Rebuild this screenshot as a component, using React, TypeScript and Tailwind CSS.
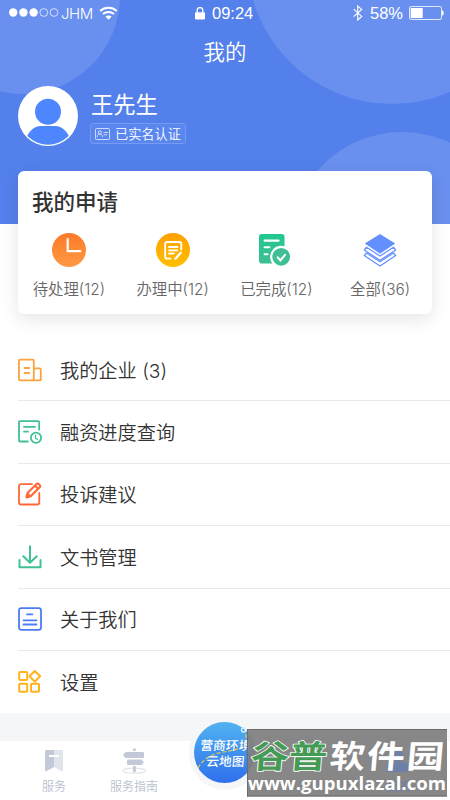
import React from "react";

const FONT = "font-['Liberation_Sans','Noto_Sans_CJK_SC',sans-serif]";
const CJK = "font-['Noto_Sans_CJK_SC',sans-serif]";
const MIXED = "font-['Inter','Noto_Sans_CJK_SC',sans-serif]";

function StatusBar() {
  return (
    <div className="relative flex h-[27px] items-center justify-between pl-[9px] pr-[6px] text-white">
      <div className="flex items-center">
        <svg className="-mt-[2px]" width="50" height="10" viewBox="0 0 50 10" fill="white">
          <circle cx="4.2" cy="4.5" r="4.2" />
          <circle cx="14.4" cy="4.5" r="4.2" />
          <circle cx="24.6" cy="4.5" r="4.2" />
          <circle cx="34.8" cy="4.5" r="3.9" fill="none" stroke="white" strokeWidth="0.7" />
          <circle cx="45" cy="4.5" r="3.9" fill="none" stroke="white" strokeWidth="0.7" />
        </svg>
        <span className="ml-[2px] w-[32px] text-[15px] leading-none tracking-[-0.4px] font-['Inter',sans-serif] font-light">JHM</span>
        <svg className="ml-[6px] -mt-[2px]" width="19" height="14" viewBox="0 0 19 14" fill="none" stroke="white" strokeWidth="2">
          <path d="M1.2 4.9c4.6-4.3 12-4.3 16.6 0M4 8c3.2-2.8 7.8-2.8 11 0" />
          <path d="M6.4 10.5c1.8-1.5 4.4-1.5 6.2 0L9.5 13.7z" fill="white" stroke="none" />
        </svg>
      </div>
      <div className="absolute left-[195px] top-[4px] flex h-[19px] items-center">
        <svg width="10" height="13" viewBox="0 0 10 13">
          <rect y="5.2" width="10" height="7.3" rx="1" fill="white" />
          <path d="M2.2 5.5V3.4a2.8 2.8 0 0 1 5.6 0v2.1" fill="none" stroke="white" strokeWidth="1.3" />
        </svg>
        <span className="ml-[7px] font-['Liberation_Sans',sans-serif] text-[16.5px] leading-[19px]">09:24</span>
      </div>
      <div className="flex items-center">
        <svg className="-mt-[1px]" width="10" height="16" viewBox="0 0 10 16" fill="none" stroke="white" strokeWidth="1.1">
          <path d="M.7 4.2l8 7.2-4 3.6V1l4 3.4-8 7.2" />
        </svg>
        <span className="ml-[7px] w-[34px] whitespace-nowrap font-['Liberation_Sans',sans-serif] text-[16.5px] leading-[19px]">58%</span>
        <svg className="ml-[5px] -mt-[1px]" width="35" height="14" viewBox="0 0 35 14">
          <rect x=".5" y=".5" width="32" height="13" rx="1.8" fill="none" stroke="white" strokeWidth=".8" />
          <rect x="1.7" y="2" width="12" height="10" fill="white" />
          <path d="M33 4.3c2.3.8 2.3 4.6 0 5.4z" fill="white" />
        </svg>
      </div>
    </div>
  );
}

function Header() {
  return (
    <header className="relative h-[224px] overflow-hidden bg-[#5380eb]">
      <svg className="absolute inset-0" width="450" height="224" fill="#6990ef">
        <circle cx="22" cy="-4" r="98" />
        <circle cx="392" cy="-41" r="145" />
        <circle cx="402" cy="244" r="112" />
      </svg>
      <StatusBar />
      <h1 className={`${CJK} relative flex h-[48px] items-center justify-center text-[21.5px] font-[350] text-white`}>我的</h1>
      <div className="relative mt-[11px] flex pl-[18px]">
        <svg width="60" height="60" viewBox="0 0 60 60">
          <defs>
            <clipPath id="face"><circle cx="30" cy="30" r="28.7" /></clipPath>
          </defs>
          <circle cx="30" cy="30" r="30" fill="white" />
          <g clipPath="url(#face)" fill="#4e86ff">
            <circle cx="30" cy="25.8" r="13" />
            <path d="M7 56c2-9 8-16 16-16h14c8 0 14 7 16 16v4H7z" />
          </g>
        </svg>
        <div className={`${CJK} ml-[12px] text-white`}>
          <div className="mt-[2px] h-[31px] pl-[1px] text-[22.3px] leading-[31px]">王先生</div>
          <div className="mt-[4px] flex h-[21px] w-[96px] items-center rounded-[3px] border border-[#779bf1] bg-[#5986ef] pl-[4px]">
            <svg width="15" height="12" viewBox="0 0 15 12" fill="none" stroke="white" strokeWidth=".7">
              <rect x=".5" y=".5" width="14" height="11" rx="1" />
              <circle cx="4.8" cy="4.3" r="1.6" />
              <path d="M2 9c.5-4 5-4 5.6 0M8.5 4.5H13M8.5 6.8H12" />
            </svg>
            <span className="ml-[5px] mt-[1px] whitespace-nowrap text-[13.2px] font-[350] leading-[18px]">已实名认证</span>
          </div>
        </div>
      </div>
    </header>
  );
}

const PendingIcon = () => (
  <svg width="34" height="34" viewBox="0 0 34 34">
    <defs><linearGradient id="po" x2="0" y2="1"><stop stopColor="#fd7a28" /><stop offset="1" stopColor="#ff9942" /></linearGradient></defs>
    <circle cx="17" cy="17" r="17" fill="url(#po)" />
    <path d="M15.7 6v12.2h12.6" fill="none" stroke="white" strokeWidth="2.2" strokeLinecap="round" />
  </svg>
);
const ProcessIcon = () => (
  <svg width="34" height="34" viewBox="0 0 34 34">
    <defs><linearGradient id="py" x2="0" y2="1"><stop stopColor="#ffa000" /><stop offset="1" stopColor="#ffc000" /></linearGradient></defs>
    <circle cx="17" cy="17" r="17" fill="url(#py)" />
    <g fill="none" stroke="white" strokeWidth="1.8" strokeLinecap="round" strokeLinejoin="round">
      <path d="M25.3 16.5V11a2 2 0 0 0-2-2H11.2a2 2 0 0 0-2 2v12.7a2 2 0 0 0 2 2h3.2M13 14h8.4M13 17.3h8.4M13 20.5h4.8" />
      <path d="M19.5 25.8l5.2-6.1" strokeWidth="2.3" />
    </g>
  </svg>
);
const DoneIcon = () => (
  <svg width="34" height="34" viewBox="0 0 34 34">
    <defs><linearGradient id="dg" x2="0" y2="1"><stop stopColor="#20c88e" /><stop offset="1" stopColor="#40be95" /></linearGradient></defs>
    <g transform="translate(-1 0)">
      <rect x="1" y="1" width="25.5" height="29.5" rx="2.8" fill="url(#dg)" />
      <path d="M6.6 7.6h14M6.6 14.2h4.8M6.6 21.3H9.5" stroke="white" strokeWidth="2.1" strokeLinecap="round" />
      <circle cx="23.2" cy="23.8" r="10" fill="#40be95" stroke="white" strokeWidth="2.2" />
      <path d="M19.7 24.4l2.7 3 4.6-5.6" fill="none" stroke="white" strokeWidth="2.1" strokeLinecap="round" />
    </g>
  </svg>
);
const LayersIcon = () => (
  <svg width="34" height="34" viewBox="0 0 34 34" fill="none" stroke="#6791ff" strokeWidth="1.3" strokeLinejoin="round">
    <path d="M3.5 20L1.3 22.5 17 33l15.7-10.5L30.5 20 17 28.7z" />
    <path d="M3.5 14.2L1.3 17 17 27.3 32.7 17l-2.2-2.8L17 23z" />
    <path d="M1.8 10.5L17 1l15.2 9.5L17 20.7z" fill="#6490ff" stroke="none" />
  </svg>
);

const stats = [
  { label: "待处理", count: "(12)", icon: <PendingIcon /> },
  { label: "办理中", count: "(12)", icon: <ProcessIcon /> },
  { label: "已完成", count: "(12)", icon: <DoneIcon /> },
  { label: "全部", count: "(36)", icon: <LayersIcon /> },
];

function Applications() {
  return (
    <section className="relative z-10 mx-[18px] -mt-[53px] h-[143px] rounded-[6px] bg-white shadow-[0_5px_18px_rgba(0,0,0,0.11)]">
      <h2 className={`${CJK} pl-[14px] pt-[15px] text-[21.5px] font-medium leading-[30px] text-[#333]`}>我的申请</h2>
      <div className="-ml-[1px] mt-[17px] grid w-[415px] grid-cols-4">
        {stats.map((s) => (
          <div key={s.label} className="flex flex-col items-center">
            {s.icon}
            <span className={`${CJK} mt-[10px] whitespace-nowrap text-[15.4px] font-[350] leading-[22px] text-[#666]`}>
              {s.label}
              <span className="font-['Inter',sans-serif] font-light">{s.count}</span>
            </span>
          </div>
        ))}
      </div>
    </section>
  );
}

const line = { width: 24, height: 24, viewBox: "0 0 24 24", fill: "none", strokeLinecap: "round", strokeLinejoin: "round", strokeWidth: 1.8 } as const;

const menu = [
  {
    label: "我的企业 (3)",
    icon: (
      <svg {...line} stroke="#faa43b">
        <rect x="1" y="1.7" width="14.8" height="20.6" rx="1" />
        <path d="M15.8 10.4h6a1 1 0 0 1 1 1v10a1 1 0 0 1-1 1h-6M6.5 10h4.8M6.5 15h4.8" />
      </svg>
    ),
  },
  {
    label: "融资进度查询",
    icon: (
      <svg {...line} stroke="#3fc195">
        <path d="M21.2 9.7V2.2a1 1 0 0 0-1-1H2a1 1 0 0 0-1 1v18.3a1 1 0 0 0 1 1h7.8M6 6.8h11M6 11.7h4" />
        <circle cx="18" cy="17.8" r="5.1" />
        <path d="M17.5 15v3.2l2 1.2" strokeWidth="1.2" />
      </svg>
    ),
  },
  {
    label: "投诉建议",
    icon: (
      <svg {...line} stroke="#ff6737">
        <path d="M14 2.2H3a2 2 0 0 0-2 2v16.3a2 2 0 0 0 2 2h16.3a2 2 0 0 0 2-2V11" />
        <path d="M8.5 15.5l1-4.4 9-9a1.6 1.6 0 0 1 2.2 0l1 1a1.6 1.6 0 0 1 0 2.2l-9 9zM17 3.8l3 3M9.6 11.7l2.8 2.8" strokeWidth="2.1" />
      </svg>
    ),
  },
  {
    label: "文书管理",
    icon: (
      <svg {...line} stroke="#3fc195" strokeWidth={2}>
        <path d="M12 1.2v16.5M5.3 11.2l6.7 6.6 6.7-6.6M1.5 14.9v7.4h21v-7.4" />
      </svg>
    ),
  },
  {
    label: "关于我们",
    icon: (
      <svg {...line} stroke="#4c7cf8">
        <rect x="1" y="1.2" width="22" height="21.7" rx="2.3" />
        <path d="M9 7.4h5.4M5.5 13.3h12.9M5.5 17.5h12.9" />
      </svg>
    ),
  },
  {
    label: "设置",
    icon: (
      <svg {...line} stroke="#ffb21a" strokeWidth={2}>
        <rect x="1.2" y="2" width="8" height="8" rx="1" />
        <rect x="1.2" y="13.8" width="8" height="8" rx="1" />
        <rect x="13" y="13.8" width="8" height="8" rx="1" />
        <path d="M16.8 1l5.3 5.3-5.3 5.3-5.3-5.3z" />
      </svg>
    ),
  },
];

function Menu() {
  return (
    <nav className="mt-[25px] h-[374px] pl-[18px]">
      {menu.map((m, i) => (
        <div key={m.label} className={`flex h-[62.4px] items-center ${i < menu.length - 1 ? "border-b border-[#e9e9eb]" : ""}`}>
          {m.icon}
          <span className={`${MIXED} ml-[18px] mt-[2px] text-[19.2px] font-[350] leading-[28px] text-[#333]`}>{m.label}</span>
        </div>
      ))}
    </nav>
  );
}

function TabBar() {
  return (
    <footer className="relative flex h-[59px] bg-white pl-[14px]">
      <div className="flex w-[80px] flex-col items-center pt-[9px]">
        <svg width="18" height="22" viewBox="0 0 18 22">
          <path d="M1 0h8v17l-8 4.2q-1 .3-1-1V1q0-1 1-1z" fill="#c3c9d8" />
          <path d="M9 0h8q1 0 1 1v19.2q0 1.3-1 1L9 17z" fill="#e1e4ea" />
          <rect x="4" y="5" width="10" height="2" rx=".5" fill="white" />
        </svg>
        <span className={`${CJK} mt-[5px] text-[12px] font-[350] leading-[18px] text-[#b8bfd0]`}>服务</span>
      </div>
      <div className="flex w-[80px] flex-col items-center pt-[7px]">
        <svg width="25" height="26" viewBox="0 0 25 26">
          <ellipse cx="12.3" cy="22.7" rx="11.4" ry="2.5" fill="none" stroke="#e1e4ea" strokeWidth="1.2" />
          <path d="M11 18h2.8v6H11zM11 .5h2.8v2.6H11zM3.5 4H21q1 0 1 1v4q0 1-1 1H3.5L1 7zM6 11.5h13.5L22 14.3 19.5 17H6q-1 0-1-1v-3.5q0-1 1-1z" fill="#c3c9d8" />
        </svg>
        <span className={`${CJK} mt-[3px] text-[12px] font-[350] leading-[18px] text-[#b8bfd0]`}>服务指南</span>
      </div>
      <div className="absolute -top-[23px] left-[189px] h-[72px] w-[72px] rounded-full bg-[#f4f6f8]" />
      <svg className="absolute -top-[19px] left-[194px]" width="61" height="61" viewBox="0 0 61 61">
        <defs><linearGradient id="map" x2="0" y2="1"><stop stopColor="#51b2f0" /><stop offset="1" stopColor="#2f70ed" /></linearGradient></defs>
        <circle cx="30.5" cy="30.5" r="30.5" fill="url(#map)" />
        <path d="M4 46c9-15 22-15 31-17 13-2 20-8 16-19" fill="none" stroke="#e5cc50" strokeWidth="1.2" strokeDasharray="4 2" />
        <circle cx="49.5" cy="8" r="2" fill="none" stroke="#d5efff" strokeWidth="1.4" />
        <g fill="white" fontFamily="Noto Sans CJK SC" fontWeight="500" fontSize="12.6">
          <text transform="translate(6 28.3) skewX(-5)" textLength="51">营商环境</text>
          <text transform="translate(12 44) skewX(-5)" textLength="38">云地图</text>
        </g>
      </svg>
      <svg className="absolute -top-[12px] left-[247px]" width="200" height="68" viewBox="0 0 200 68">
        <rect width="200" height="67.5" fill="#808080" fillOpacity=".94" />
        <path d="M.5 0v67.5M0 .5h200M0 67h200" stroke="#6c6c6c" strokeWidth="1" />
        <g fill="#6f80a8">
          <circle cx="151" cy="27" r="5.5" />
          <path d="M140 43v-5q0-5 5-5h11q5 0 5 5v5z" />
          <text x="139" y="62" fontSize="12" fontFamily="Noto Sans CJK SC">我的</text>
        </g>
        <g fontFamily="Noto Sans CJK SC" fontWeight="700" fontSize="32">
          <g fill="#459b55" stroke="white" strokeWidth="1.6" paintOrder="stroke" strokeLinejoin="round">
            <text transform="translate(3 39) skewX(-5) scale(1.2 1)">谷</text>
            <text transform="translate(41 39) skewX(-5) scale(1.2 1)">普</text>
          </g>
          <g fill="white">
            <text transform="translate(82 39) skewX(-5) scale(1.1 1)">软</text>
            <text transform="translate(119 39) skewX(-5) scale(1.18 1)">件</text>
            <text transform="translate(159 39) skewX(-5) scale(1.16 1)">园</text>
          </g>
        </g>
        <text x="1" y="61" fill="white" fontFamily="Open Sans" fontWeight="700" fontSize="18.5" textLength="198" lengthAdjust="spacingAndGlyphs">www.gupuxlazal.com</text>
      </svg>
    </footer>
  );
}

export default function App() {
  return (
    <main className={`${FONT} h-[800px] w-[450px] overflow-hidden bg-white`}>
      <Header />
      <Applications />
      <Menu />
      <div className="h-[28px] bg-[#f4f6f8]" />
      <TabBar />
    </main>
  );
}
